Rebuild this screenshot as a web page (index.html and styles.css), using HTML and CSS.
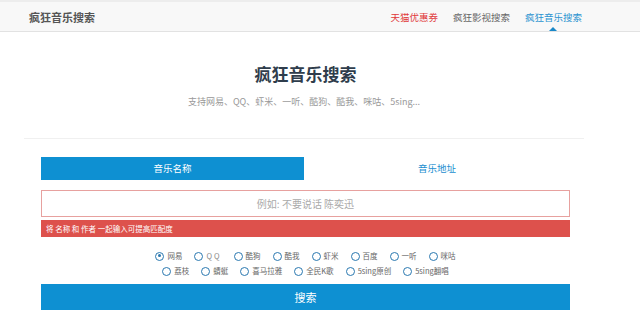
FILE: index.html
```html
<!DOCTYPE html>
<html lang="zh-CN">
<head>
<meta charset="utf-8">
<title>疯狂音乐搜索</title>
<link rel="stylesheet" href="styles.css">
</head>
<body>
<header class="topbar">
  <div class="brand">疯狂音乐搜索</div>
  <nav class="nav">
    <a class="nav-item nav-hot">天猫优惠券</a>
    <a class="nav-item">疯狂影视搜索</a>
    <a class="nav-item nav-active">疯狂音乐搜索</a>
  </nav>
</header>
<section class="hero">
  <h1 class="title">疯狂音乐搜索</h1>
  <p class="subtitle">支持网易、QQ、虾米、一听、酷狗、酷我、咪咕、5sing...</p>
</section>
<main class="form">
  <div class="tabs">
    <div class="tab tab-active">音乐名称</div>
    <div class="tab">音乐地址</div>
  </div>
  <div class="input">例如: 不要说话 陈奕迅</div>
  <div class="error">将 名称 和 作者 一起输入可提高匹配度</div>
  <div class="radios">
    <div class="radio-row">
      <span class="radio checked"><i></i>网易</span>
      <span class="radio"><i></i><b class="qq">QQ</b></span>
      <span class="radio"><i></i>酷狗</span>
      <span class="radio"><i></i>酷我</span>
      <span class="radio"><i></i>虾米</span>
      <span class="radio"><i></i>百度</span>
      <span class="radio"><i></i>一听</span>
      <span class="radio"><i></i>咪咕</span>
    </div>
    <div class="radio-row">
      <span class="radio"><i></i>荔枝</span>
      <span class="radio"><i></i>蜻蜓</span>
      <span class="radio"><i></i>喜马拉雅</span>
      <span class="radio"><i></i>全民K歌</span>
      <span class="radio"><i></i>5sing原创</span>
      <span class="radio"><i></i>5sing翻唱</span>
    </div>
  </div>
  <div class="button">搜索</div>
</main>
</body>
</html>
```

FILE: styles.css
```css
* { box-sizing: border-box; }
html, body { margin: 0; padding: 0; background: #fff; }
body {
  font-family: "Noto Sans CJK SC", "Noto Sans", "Liberation Sans", sans-serif;
  color: #333;
  width: 640px;
  height: 327px;
  overflow: hidden;
}
.topbar {
  height: 32px;
  border-top: 2px solid #ededed;
  border-bottom: 1px solid #e2e2e2;
  background: #f8f8f8;
  display: flex;
  align-items: center;
  justify-content: space-between;
  padding: 0 58px 0 29px;
}
.brand { font-size: 11px; font-weight: bold; color: #555; }
.nav { display: flex; gap: 15px; height: 100%; align-items: center; }
.nav-item { font-size: 9.5px; color: #666; position: relative; height: 100%; display: flex; align-items: center; }
.nav-hot { color: #e0393a; }
.nav-active { color: #2a93d0; }
.nav-active::after {
  content: "";
  position: absolute;
  left: 50%;
  bottom: 0;
  margin-left: -4px;
  border: 4px solid transparent;
  border-bottom-color: #1a88c8;
  border-top-width: 0;
}
.hero {
  margin: 0 0 0 24px;
  width: 560px;
  text-align: center;
  padding: 33px 0 30px;
  border-bottom: 1px solid #f0f0f0;
}
.title {
  margin: 0;
  font-size: 17px;
  line-height: 18px;
  font-weight: bold;
  color: #2f3d4c;
  padding-left: 3px;
}
.subtitle {
  margin: 13px 0 0;
  font-size: 9px;
  line-height: 12px;
  color: #999;
}
.form {
  margin: 18px 0 0 41px;
  width: 529px;
}
.tabs { display: flex; height: 23px; }
.tab {
  flex: 1;
  text-align: center;
  line-height: 23px;
  font-size: 9.5px;
  color: #1b8ecf;
}
.tab-active { background: #0e90d2; color: #fff; flex: 0 0 263px; }
.input {
  margin-top: 10px;
  height: 27px;
  border: 1px solid #e7a19f;
  text-align: center;
  font-size: 10px;
  line-height: 25px;
  color: #aaa;
}
.error {
  margin-top: 3px;
  height: 17px;
  line-height: 17px;
  background: #dd514c;
  color: #fff;
  font-size: 7.5px;
  padding-left: 5px;
}
.radios { margin-top: 13px; }
.radio-row {
  display: flex;
  justify-content: center;
  gap: 12px;
  height: 12px;
  align-items: center;
  margin-bottom: 3px;
}
.radio {
  display: flex;
  align-items: center;
  gap: 3px;
  font-size: 7.5px;
  color: #666;
  line-height: 12px;
}
.radio i {
  display: block;
  width: 9px;
  height: 9px;
  border: 1.7px solid #2a78b0;
  border-radius: 50%;
  position: relative;
}
.radio.checked i::after {
  content: "";
  position: absolute;
  left: 1.3px;
  top: 1.3px;
  width: 3px;
  height: 3px;
  background: #2a78b0;
  border-radius: 50%;
}
.qq { font-weight: normal; letter-spacing: 2px; color: #888; }
.button {
  margin-top: 7px;
  height: 26px;
  background: #0e90d2;
  color: #fff;
  text-align: center;
  font-size: 11px;
  line-height: 26px;
}
```
